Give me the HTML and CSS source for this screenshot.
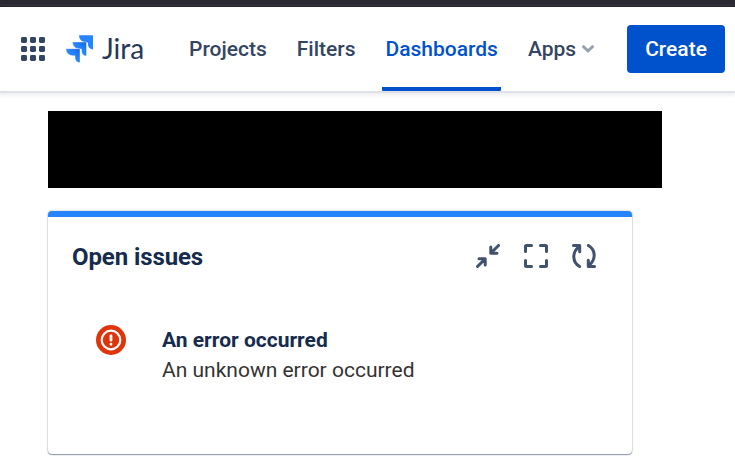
FILE: index.html
```html
<!DOCTYPE html>
<html lang="en">
<head>
<meta charset="utf-8">
<title>Jira</title>
<link rel="stylesheet" href="styles.css">
</head>
<body>
<div class="window-edge"></div>
<header class="topbar">
  <svg class="switcher" width="24" height="24" viewBox="0 0 24 24" fill="#344563">
    <rect width="6" height="6" rx="1.4"/><rect x="9" width="6" height="6" rx="1.4"/><rect x="18" width="6" height="6" rx="1.4"/>
    <rect y="9" width="6" height="6" rx="1.4"/><rect x="9" y="9" width="6" height="6" rx="1.4"/><rect x="18" y="9" width="6" height="6" rx="1.4"/>
    <rect y="18" width="6" height="6" rx="1.4"/><rect x="9" y="18" width="6" height="6" rx="1.4"/><rect x="18" y="18" width="6" height="6" rx="1.4"/>
  </svg>
  <a class="brand">
    <svg width="28" height="28" viewBox="0 0 28 28">
      <defs>
        <linearGradient id="fold" x1="0.95" y1="0.05" x2="0.55" y2="0.45">
          <stop offset="0" stop-color="#1769e0"/><stop offset="1" stop-color="#2684ff"/>
        </linearGradient>
      </defs>
      <path fill="#2684ff" d="M13 .3h13.300q.7 0 .7.700v13.400a5 5 0 0 1-5-5V7.400h-2.200A6.800 6.800 0 0 1 13 .3z"/>
      <path fill="url(#fold)" stroke="#fff" stroke-width=".4" d="M6.500 7h13.300q.7 0 .7.700v13.400a5 5 0 0 1-5-5V14h-2.200A6.800 6.800 0 0 1 6.500 7z"/>
      <path fill="url(#fold)" stroke="#fff" stroke-width=".4" d="M0 13.700h13.300q.7 0 .7.700v13.400a5 5 0 0 1-5-5V20.800H6.800A6.800 6.800 0 0 1 0 13.700z"/>
    </svg>
    <span class="brand-name">Jira</span>
  </a>
  <nav class="nav">
    <a class="nav-item">Projects</a>
    <a class="nav-item">Filters</a>
    <a class="nav-item active">Dashboards</a>
    <a class="nav-item">Apps<svg class="chevron" width="12" height="8" viewBox="0 0 12 8" fill="none" stroke="#97a0af" stroke-width="3" stroke-linecap="round" stroke-linejoin="round"><path d="M1.600 1.700 6 6l4.400-4.300"/></svg></a>
  </nav>
  <button class="create">Create</button>
</header>
<main class="page">
  <div class="redacted"></div>
  <section class="gadget">
    <div class="gadget-head">
      <h3 class="gadget-title">Open issues</h3>
      <svg width="24" height="24" viewBox="0 0 24 24" fill="none" stroke="#42526e" stroke-width="3" stroke-linecap="round" stroke-linejoin="round">
        <path d="M22.500 1.500 16 8M14.800 3v6.200H21M1.500 22.500 8 16M3 14.800h6.200V21"/>
      </svg>
      <svg width="24" height="24" viewBox="0 0 24 24" fill="none" stroke="#42526e" stroke-width="3" stroke-linecap="round" stroke-linejoin="round">
        <path d="M1.500 7.500v-5q0-1 1-1h5M16.500 1.500h5q1 0 1 1v5M22.500 16.500v5q0 1-1 1h-5M7.500 22.500h-5q-1 0-1-1v-5"/>
      </svg>
      <svg width="24" height="24" viewBox="0 0 24 24" fill="none" stroke="#42526e" stroke-width="3" stroke-linecap="round" stroke-linejoin="round">
        <path d="M7.600 22.500C.2 18.200-.3 8.500 7.200 2.300M1.500 1.500h6.200v6.200M16.400 1.500C23.800 5.800 24.300 15.500 16.800 21.700M22.500 22.500h-6.200v-6.200"/>
      </svg>
    </div>
    <div class="message">
      <svg class="error-icon" width="30" height="30" viewBox="0 0 30 30">
        <circle cx="15" cy="15" r="15" fill="#de350b"/>
        <circle cx="15" cy="15" r="9.300" fill="none" stroke="#fff" stroke-width="2.200"/>
        <path d="M15 10.800v4.400M15 19.100v.2" stroke="#fff" stroke-width="2.800" stroke-linecap="round"/>
      </svg>
      <div class="message-text">
        <strong>An error occurred</strong>
        <p>An unknown error occurred</p>
      </div>
    </div>
  </section>
</main>
</body>
</html>
```
FILE: styles.css
```css
* { box-sizing: border-box; }
body {
  margin: 0;
  height: 466px;
  overflow: hidden;
  background: #fff;
  font-family: Roboto, sans-serif;
  color: #172b4d;
}
svg { display: block; flex: none; }
.window-edge {
  height: 7px;
  background: #2b2a33;
  border-bottom: 1px solid #0c0c0d;
}
.topbar {
  display: flex;
  align-items: center;
  height: 84px;
  padding: 0 10px 0 21px;
  box-shadow: 0 2px 0 #dfe1e6, 0 3px 4px 1px #ebecf0;
}
.brand {
  display: flex;
  align-items: center;
  width: 102px;
  margin-left: 21px;
}
.brand-name {
  margin-left: 8px;
  padding-bottom: 2px;
  font: 28px/32px Lato, sans-serif;
  color: #253858;
}
.nav {
  display: flex;
  align-self: stretch;
  margin-left: 17.5px;
  gap: 23px;
}
.nav-item {
  display: flex;
  align-items: center;
  padding: 0 3.5px;
  font-size: 21px;
  font-weight: 500;
  color: #344563;
  border-bottom: 4px solid transparent;
  border-top: 4px solid transparent;
}
.nav-item.active {
  color: #0052cc;
  border-bottom-color: #0052cc;
  border-radius: 1px;
}
.chevron { margin-left: 6px; }
.create {
  margin-left: auto;
  width: 98px;
  height: 48px;
  padding: 0;
  border: 0;
  border-radius: 4px;
  background: #0052cc;
  color: #fff;
  font: 500 21px/48px Roboto, sans-serif;
}
.page { padding: 20px 0 0 48px; }
.redacted {
  width: 614px;
  height: 77px;
  background: #000;
}
.gadget {
  width: 584px;
  height: 243px;
  margin-top: 23px;
  border-top: 6px solid #2684ff;
  border-radius: 4px;
  box-shadow: 0 1px 1px rgba(9, 30, 66, .4), 0 0 2px rgba(9, 30, 66, .4);
}
.gadget-head {
  display: flex;
  align-items: center;
  gap: 24px;
  height: 78px;
  padding: 0 36px 0 24px;
}
.gadget-title {
  flex: 1;
  margin: 0;
  padding-top: 1px;
  font-size: 24px;
  font-weight: 700;
  letter-spacing: -.1px;
}
.message {
  display: flex;
  padding: 30px 48px;
}
.message-text {
  margin-left: 36px;
  font-size: 21px;
  line-height: 30px;
}
.message-text strong { display: block; }
.message-text p { margin: 0; color: #333; }
```
